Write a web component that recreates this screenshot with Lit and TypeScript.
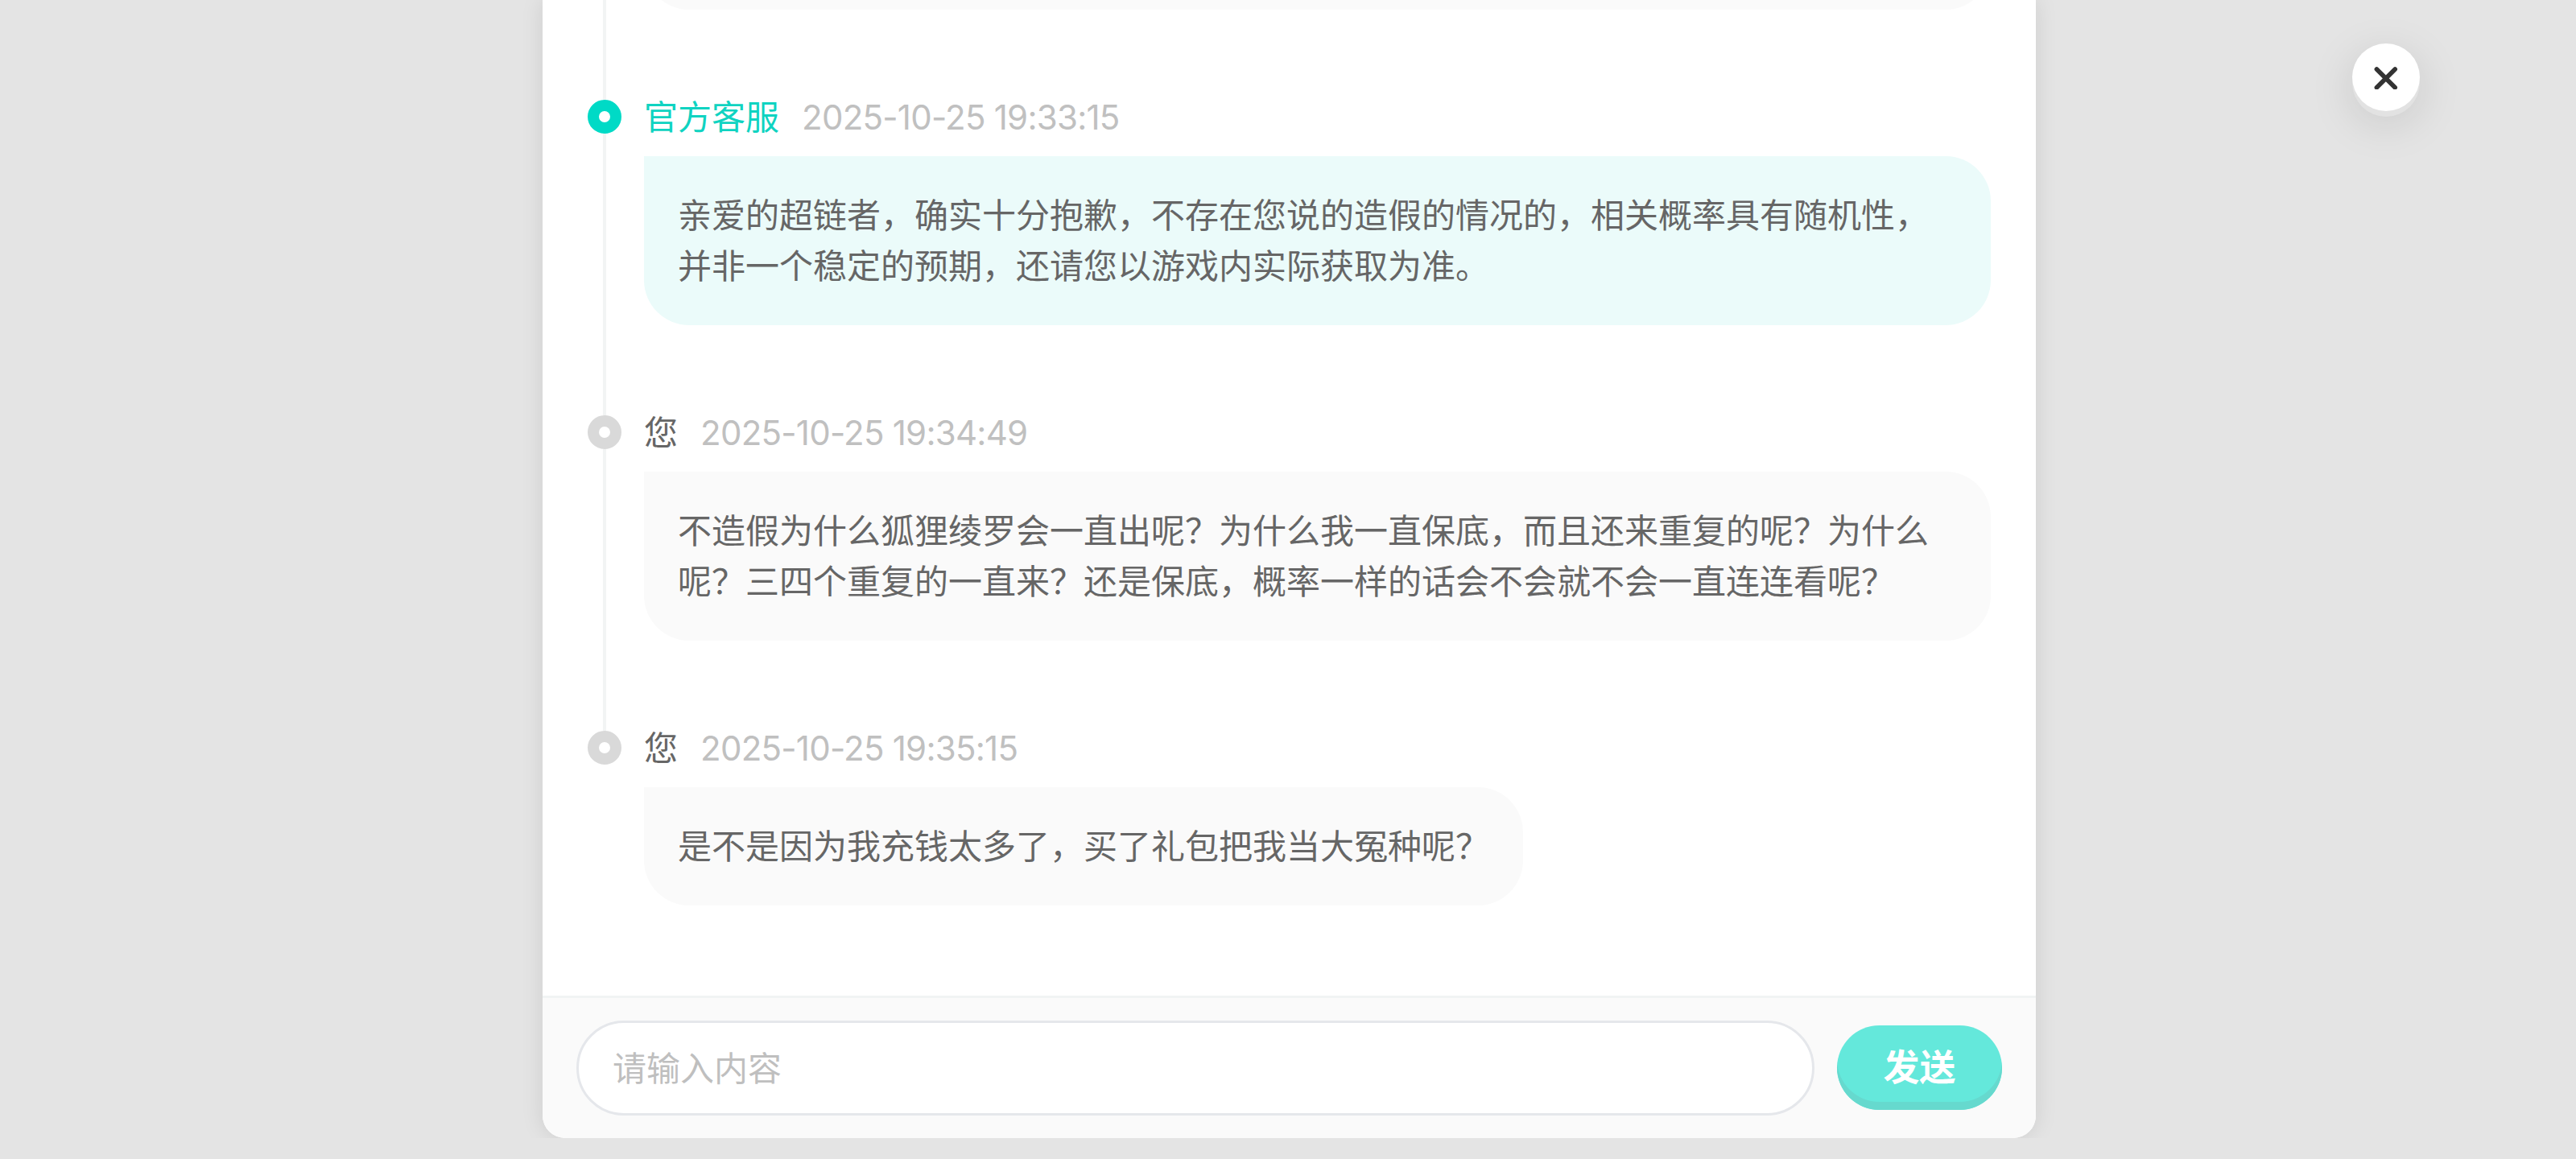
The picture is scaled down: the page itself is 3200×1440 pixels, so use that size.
import { LitElement, html, css } from 'lit';
import { customElement, property } from 'lit/decorators.js';
import { classMap } from 'lit/directives/class-map.js';

interface Message {
  author: string;
  time: string;
  text: string;
  official?: boolean;
}

const MESSAGES: Message[] = [
  { author: '', time: '', text: '' },
  {
    author: '官方客服',
    time: '2025-10-25 19:33:15',
    text: '亲爱的超链者，确实十分抱歉，不存在您说的造假的情况的，相关概率具有随机性，并非一个稳定的预期，还请您以游戏内实际获取为准。',
    official: true,
  },
  {
    author: '您',
    time: '2025-10-25 19:34:49',
    text: '不造假为什么狐狸绫罗会一直出呢？为什么我一直保底，而且还来重复的呢？为什么呢？三四个重复的一直来？还是保底，概率一样的话会不会就不会一直连连看呢？',
  },
  {
    author: '您',
    time: '2025-10-25 19:35:15',
    text: '是不是因为我充钱太多了，买了礼包把我当大冤种呢？',
  },
];

@customElement('chat-message')
export class ChatMessage extends LitElement {
  static override styles = css`
    :host {
      display: flex;
      flex: none;
    }
    .rail {
      display: flex;
      flex-direction: column;
      align-items: center;
      width: 42px;
      margin-right: 28px;
    }
    .dot {
      flex: none;
      box-sizing: border-box;
      width: 42px;
      height: 42px;
      border: 14px solid #d9d9d9;
      border-radius: 50%;
      background: #fff;
    }
    .dot.official {
      border-color: #00dac6;
    }
    .line {
      flex: 1;
      width: 4px;
      background: #f2f4f4;
    }
    .body {
      flex: 1;
      padding-bottom: 112px;
    }
    .head {
      display: flex;
      gap: 28px;
      height: 42px;
      margin-bottom: 28px;
      white-space: nowrap;
    }
    .author {
      color: #666;
      line-height: 37px;
    }
    .author.official {
      color: #0fd3c1;
    }
    .time {
      color: #c0c0c0;
      font-family: Inter, 'Noto Sans CJK SC', sans-serif;
      font-size: 42px;
      line-height: 43px;
      letter-spacing: -0.75px;
    }
    .bubble {
      box-sizing: border-box;
      width: fit-content;
      min-height: 147px;
      padding: 39px 42px 45px;
      border-radius: 0 56px 56px 56px;
      background: #fafafa;
      color: #666;
      line-height: 63px;
      word-break: break-all;
      text-spacing-trim: space-all;
    }
    .bubble.official {
      background: #ebfbfa;
    }
    .bubble.blank {
      width: auto;
    }
  `;

  @property({ attribute: false }) message!: Message;

  @property({ type: Boolean }) last = false;

  render() {
    const { author, time, text, official = false } = this.message;
    return html`
      <div class="rail">
        <div class=${classMap({ dot: true, official })}></div>
        ${this.last ? '' : html`<div class="line"></div>`}
      </div>
      <div class="body">
        <div class="head">
          <span class=${classMap({ author: true, official })}>${author}</span>
          <span class="time">${time}</span>
        </div>
        <div class=${classMap({ bubble: true, official, blank: !text })}>${text}</div>
      </div>
    `;
  }
}

@customElement('app-root')
export class AppRoot extends LitElement {
  static override styles = css`
    :host {
      display: block;
      position: relative;
      height: 1440px;
      overflow: hidden;
      background: #e4e4e4;
      font-family: 'Noto Sans CJK SC', sans-serif;
      font-size: 42px;
    }
    .view {
      display: flex;
      height: 1414px;
      padding: 0 671px 0 674px;
      overflow: hidden;
    }
    .panel {
      display: flex;
      flex-direction: column;
      flex: 1;
      min-width: 0;
      border-radius: 0 0 28px 28px;
      background: #fff;
      box-shadow: 0 0 28px rgba(0, 0, 0, 0.1);
    }
    .messages {
      display: flex;
      flex-direction: column;
      justify-content: flex-end;
      flex: 1;
      min-height: 0;
      padding: 0 56px;
      overflow: hidden;
    }
    .footer {
      display: flex;
      align-items: center;
      gap: 28px;
      padding: 28px 42px;
      border-top: 3px solid #f1f4f4;
      border-radius: 0 0 28px 28px;
      background: #fafafa;
    }
    .input {
      flex: 1;
      min-width: 0;
      box-sizing: border-box;
      height: 118px;
      padding: 0 42px 5px;
      border: 3px solid #e5e7eb;
      border-radius: 59px;
      outline: none;
      background: #fff;
      color: #666;
      font: inherit;
    }
    .input::placeholder {
      color: #bfbfbf;
      opacity: 1;
    }
    .send {
      box-sizing: border-box;
      width: 205px;
      height: 105px;
      margin-bottom: 1px;
      padding: 0 0 5px;
      border: none;
      border-radius: 53px;
      background: #64e8db;
      box-shadow: inset 0 -10px 0 #66d9ce;
      color: #fff;
      font: inherit;
      font-size: 45px;
      font-weight: 700;
      line-height: 100px;
    }
    .close {
      position: absolute;
      top: 54px;
      right: 194px;
      display: flex;
      align-items: center;
      justify-content: center;
      width: 84px;
      height: 84px;
      padding: 0;
      border: none;
      border-radius: 50%;
      background: #fff;
      box-shadow: 0 7px 0 #e2e2e2, 0 14px 56px rgba(0, 0, 0, 0.13);
    }
    .close svg {
      width: 30px;
      height: 30px;
      fill: none;
      stroke: #333;
      stroke-width: 5.6;
      stroke-linecap: round;
    }
  `;

  render() {
    return html`
      <div class="view">
        <div class="panel">
          <div class="messages">
            ${MESSAGES.map(
              (message, i) => html`
                <chat-message .message=${message} ?last=${i === MESSAGES.length - 1}></chat-message>
              `
            )}
          </div>
          <div class="footer">
            <input class="input" placeholder="请输入内容" />
            <button class="send">发送</button>
          </div>
        </div>
      </div>
      <button class="close" aria-label="关闭">
        <svg viewBox="0 0 30 30"><path d="M3.4 5l22.8 22.8M26.2 5L3.4 27.8" /></svg>
      </button>
    `;
  }
}
